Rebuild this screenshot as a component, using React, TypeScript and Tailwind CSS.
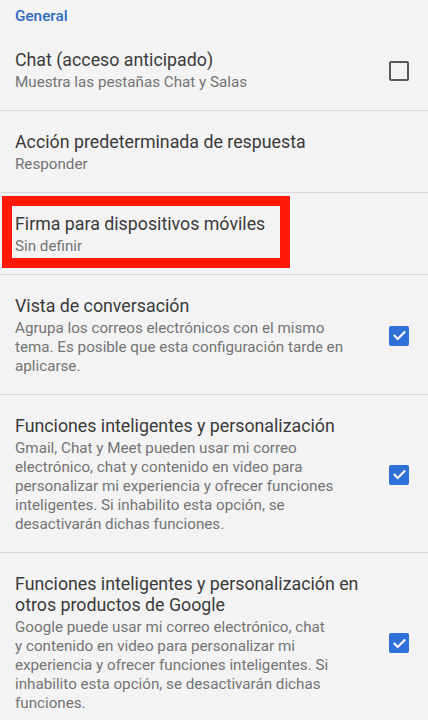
import React from 'react';

type Row = {
  title: string[];
  sub: string[];
  check?: 'on' | 'off';
};

const rows: Row[] = [
  { title: ['Chat (acceso anticipado)'], sub: ['Muestra las pestañas Chat y Salas'], check: 'off' },
  { title: ['Acción predeterminada de respuesta'], sub: ['Responder'] },
  { title: ['Firma para dispositivos móviles'], sub: ['Sin definir'] },
  {
    title: ['Vista de conversación'],
    sub: [
      'Agrupa los correos electrónicos con el mismo',
      'tema. Es posible que esta configuración tarde en',
      'aplicarse.',
    ],
    check: 'on',
  },
  {
    title: ['Funciones inteligentes y personalización'],
    sub: [
      'Gmail, Chat y Meet pueden usar mi correo',
      'electrónico, chat y contenido en video para',
      'personalizar mi experiencia y ofrecer funciones',
      'inteligentes. Si inhabilito esta opción, se',
      'desactivarán dichas funciones.',
    ],
    check: 'on',
  },
  {
    title: ['Funciones inteligentes y personalización en', 'otros productos de Google'],
    sub: [
      'Google puede usar mi correo electrónico, chat',
      'y contenido en video para personalizar mi',
      'experiencia y ofrecer funciones inteligentes. Si',
      'inhabilito esta opción, se desactivarán dichas',
      'funciones.',
    ],
    check: 'on',
  },
];

function Checkbox({ on }: { on: boolean }) {
  if (on) {
    return (
      <div className="w-5 h-5 rounded-[2px] bg-[#2f6fd8] flex items-center justify-center">
        <svg viewBox="0 0 24 24" className="w-[17px] h-[17px]" fill="none" stroke="white" strokeWidth="3" strokeLinecap="square">
          <path d="M5 12.5l4.5 4.5L19 7.5" />
        </svg>
      </div>
    );
  }
  return <div className="w-5 h-5 rounded-[2px] border-2 border-[#585858]" />;
}

function SettingRow({ row, last }: { row: Row; last: boolean }) {
  return (
    <div className={`flex items-center pl-[15px] pr-[19px] pt-[20px] pb-[18px] ${last ? '' : 'border-b border-[#d8d8d8]'}`}>
      <div className="flex-1">
        {row.title.map((t) => (
          <div key={t} className="text-[17.8px] leading-[21px] text-[#3a3a3a] whitespace-nowrap">
            {t}
          </div>
        ))}
        <div className="mt-[3px]">
          {row.sub.map((s) => (
            <div key={s} className="text-[15.2px] leading-[19px] text-[#747474] whitespace-nowrap">
              {s}
            </div>
          ))}
        </div>
      </div>
      {row.check && <Checkbox on={row.check === 'on'} />}
    </div>
  );
}

export default function App() {
  return (
    <div className="relative w-[428px] h-[720px] overflow-hidden bg-[#f3f3f3]" style={{ fontFamily: 'Roboto, "Noto Sans", sans-serif' }}>
      <div className="pl-[15px] pt-[6px] pb-[3px] text-[15.3px] leading-5 font-medium text-[#2f6ac4]">General</div>
      {rows.map((r, i) => (
        <SettingRow key={i} row={r} last={i === rows.length - 1} />
      ))}
      <div className="absolute left-[2px] top-[196px] w-[288px] h-[72px] border-[10px] border-[#ff1a0a]" />
    </div>
  );
}
